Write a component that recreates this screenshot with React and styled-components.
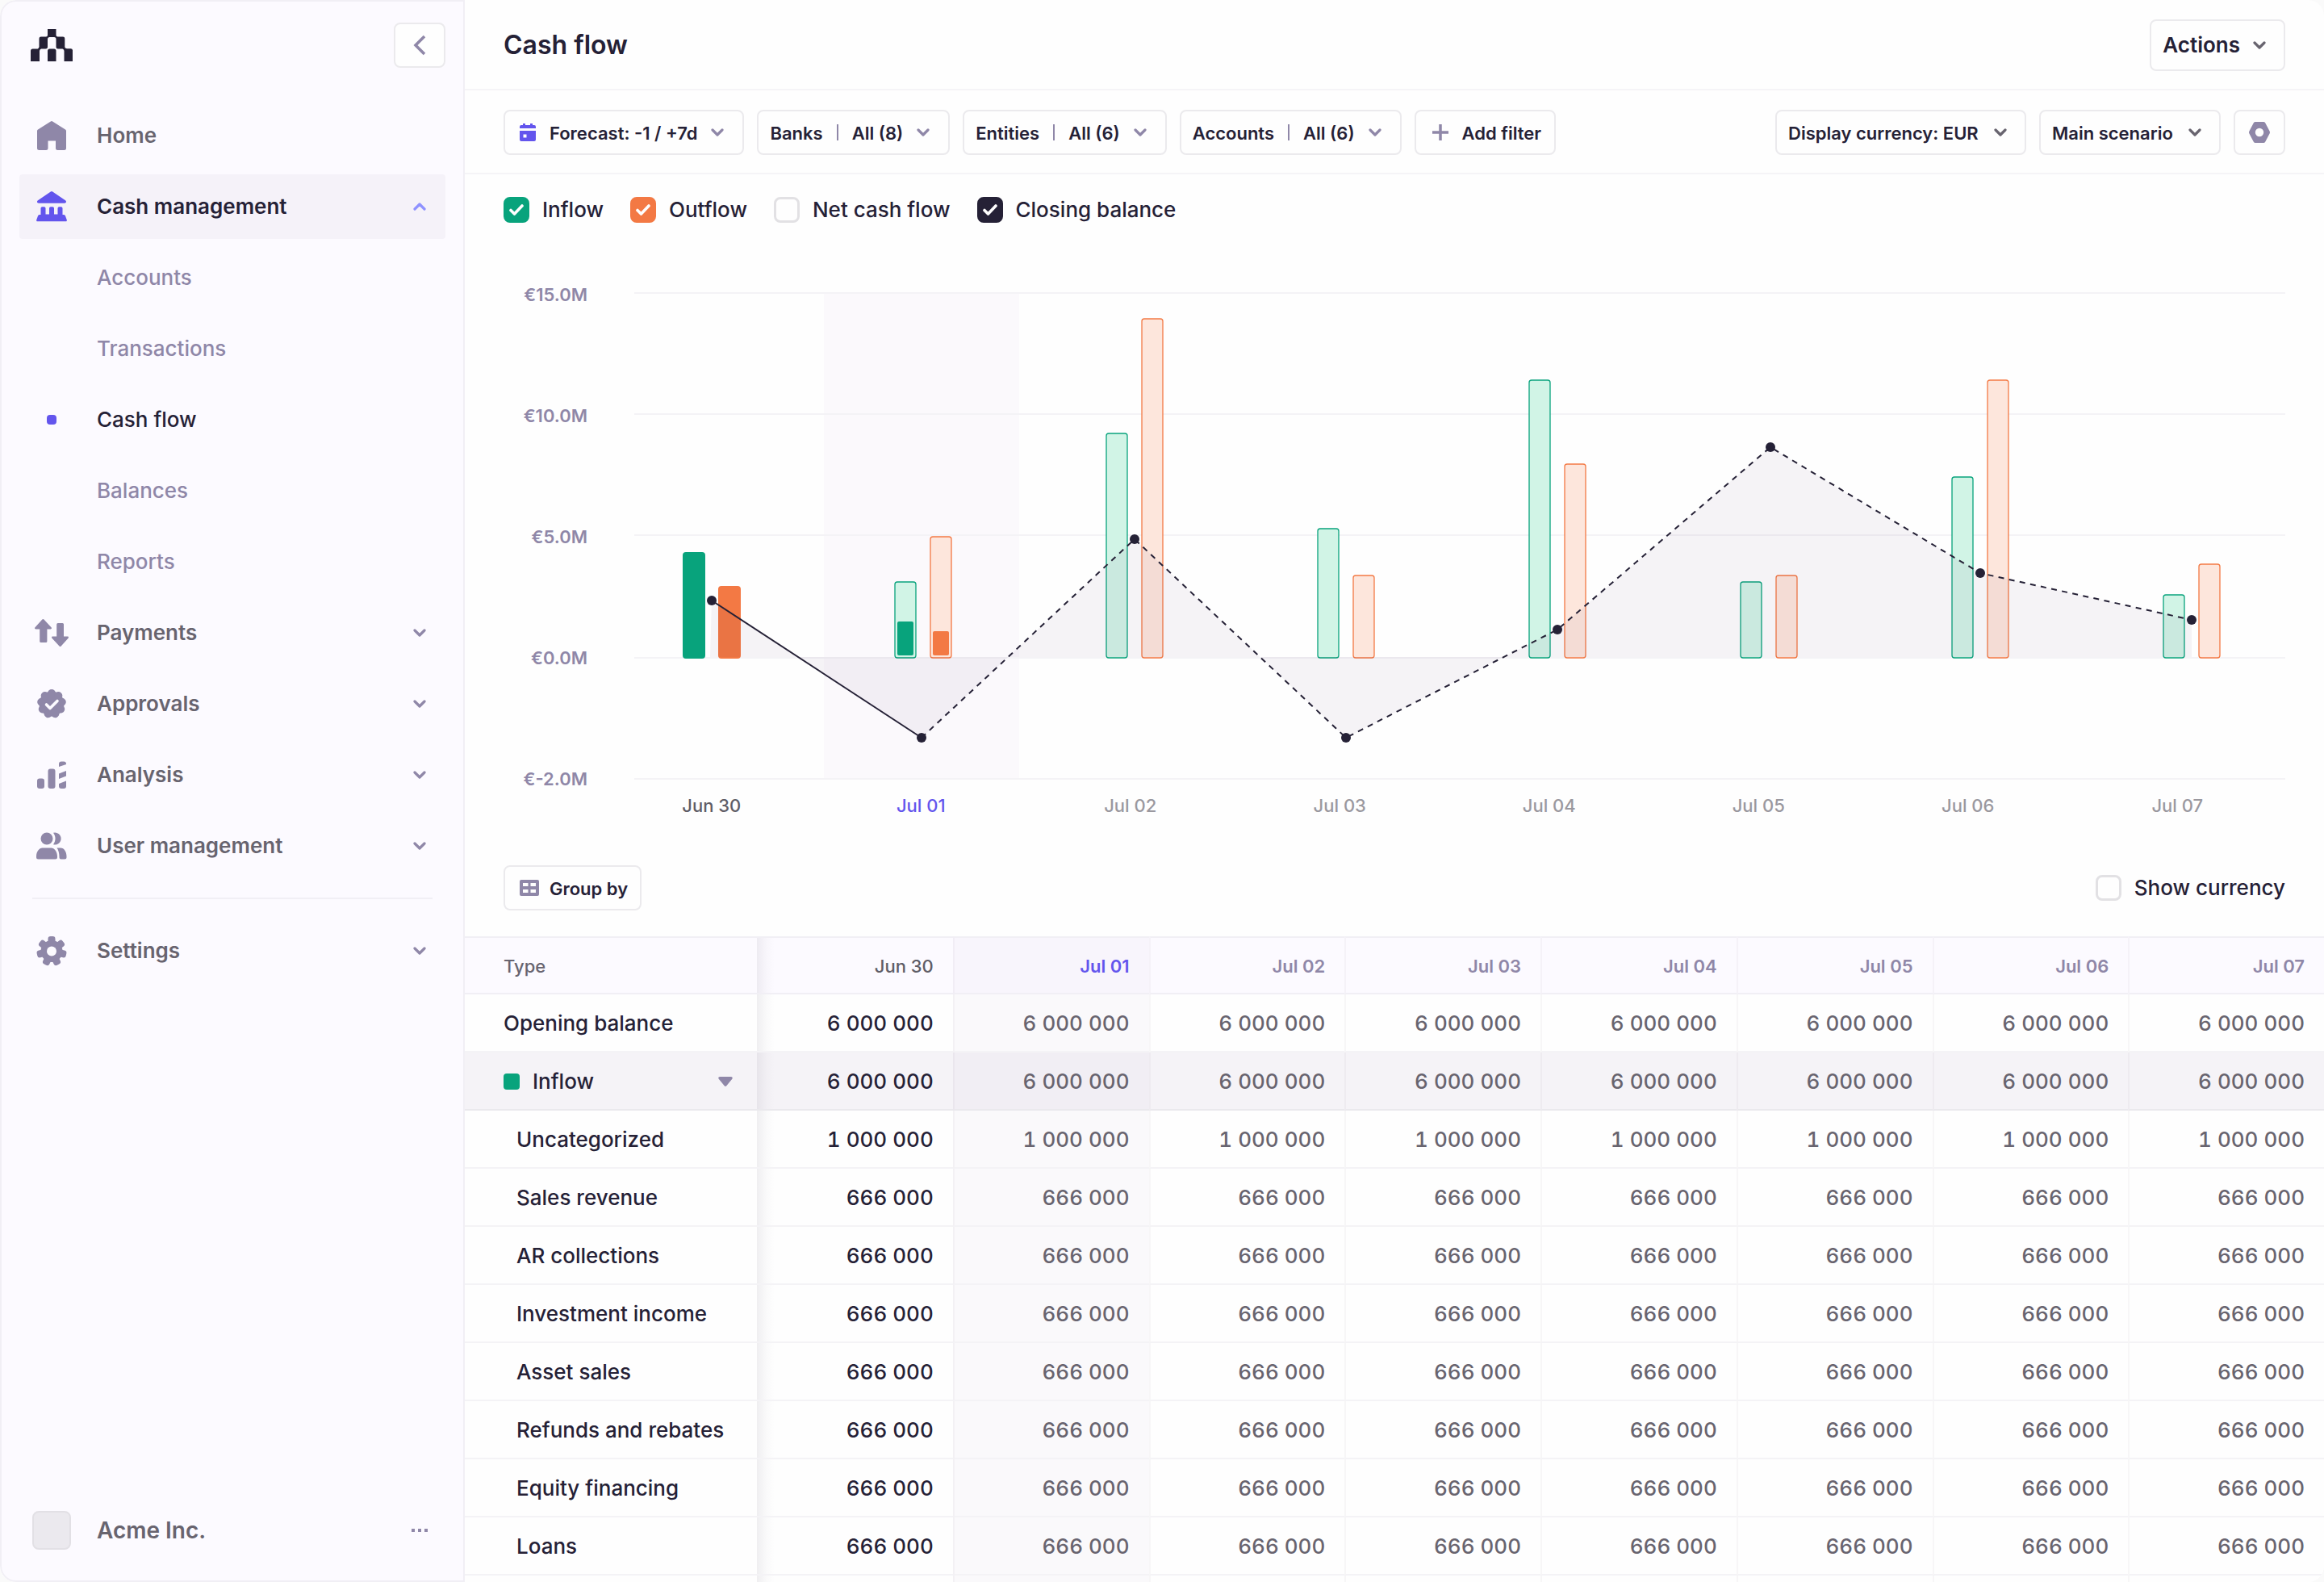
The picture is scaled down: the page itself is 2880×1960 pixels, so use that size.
import React from 'react';
import styled, { createGlobalStyle, css } from 'styled-components';

const GlobalStyle = createGlobalStyle`
  * {
    box-sizing: border-box;
  }
  body {
    margin: 0;
    background: #fafafa;
    color: #252136;
    font-family: "Inter", "Liberation Sans", sans-serif;
    font-size: 26px;
    line-height: 32px;
    font-weight: 500;
  }
  button, select, input {
    font: inherit;
    color: inherit;
    margin: 0;
  }
  a {
    color: inherit;
    text-decoration: none;
  }
  svg {
    display: block;
    flex-shrink: 0;
  }
`;

const days = ['Jun 30', 'Jul 01', 'Jul 02', 'Jul 03', 'Jul 04', 'Jul 05', 'Jul 06', 'Jul 07'];
const TODAY = 1;

const rows = [
  { name: 'Opening balance', value: '6 000 000' },
  { name: 'Inflow', value: '6 000 000', group: true },
  { name: 'Uncategorized', value: '1 000 000', sub: true },
  { name: 'Sales revenue', value: '666 000', sub: true },
  { name: 'AR collections', value: '666 000', sub: true },
  { name: 'Investment income', value: '666 000', sub: true },
  { name: 'Asset sales', value: '666 000', sub: true },
  { name: 'Refunds and rebates', value: '666 000', sub: true },
  { name: 'Equity financing', value: '666 000', sub: true },
  { name: 'Loans', value: '666 000', sub: true },
];

// bar heights and balance positions, in chart units
const series = [
  { inflow: 132, outflow: 90, balance: 382, x: 96 },
  { inflow: 96, outflow: 152, balance: 552, x: 356, inflowDone: 42, outflowDone: 30 },
  { inflow: 280, outflow: 422, balance: 306, x: 620 },
  { inflow: 162, outflow: 104, balance: 552, x: 882 },
  { inflow: 346, outflow: 242, balance: 418, x: 1144 },
  { inflow: 96, outflow: 104, balance: 192, x: 1408 },
  { inflow: 226, outflow: 346, balance: 348, x: 1668 },
  { inflow: 80, outflow: 118, balance: 406, x: 1930 },
];

/* icons */

const Chevron = ({ up }) => (
  <svg width="16" height="12" viewBox="0 0 16 12" fill="none" stroke="currentColor" strokeWidth="3.2" strokeLinecap="round" strokeLinejoin="round">
    <path d={up ? 'M2 9l6-6 6 6' : 'M2 3l6 6 6-6'} />
  </svg>
);

const Logo = () => (
  <svg width="52" height="40" viewBox="0 0 52 40" fill="#252136">
    <path d="M21 0h10.500v7.500a2 2 0 0 0 2 2H40a2.300 2.300 0 0 1 2.300 2.300V21a3 3 0 0 0 3 3.300h4A2.500 2.500 0 0 1 52 27v13H41.500V27a3 3 0 0 0-2-2.500h-5.500a2.500 2.500 0 0 1-2.500-2.500V12.500a2.500 2.500 0 0 0-2.500-2.500h-5.500a2.500 2.500 0 0 0-2.500 2.500V22a2.500 2.500 0 0 1-2.500 2.500H13a3 3 0 0 0-2 2.500v13H0V27a2.500 2.500 0 0 1 2.500-2.500H7A3 3 0 0 0 10.500 21v-9.200a2.300 2.300 0 0 1 2.300-2.300H19a2 2 0 0 0 2-2z" />
    <path d="M21 40V27a2.500 2.500 0 0 1 2.500-2.500h5.500a2.500 2.500 0 0 1 2.500 2.500v13z" />
  </svg>
);

const HomeIcon = () => (
  <svg width="40" height="40" viewBox="0 0 40 40" fill="currentColor">
    <path d="M18.800 2.400a2 2 0 0 1 2.400 0L37 12.400a2 2 0 0 1 1 1.800V35.500a2.500 2.500 0 0 1-2.500 2.500H27.500a2.500 2.500 0 0 1-2.500-2.500V26.500H15.500V35.500a2.500 2.500 0 0 1-2.500 2.500H4.500A2.500 2.500 0 0 1 2 35.500V14.200a2 2 0 0 1 1-1.800z" />
  </svg>
);

const BankIcon = () => (
  <svg width="40" height="40" viewBox="0 0 40 40" fill="currentColor">
    <path d="M18.800 1.500a2 2 0 0 1 2.400 0L37 12.300c1.800 1.300 1 3.400-1 3.400H4c-2 0-2.800-2.100-1-3.400z" />
    <path d="M6.500 30V22a1.800 1.800 0 0 1 1.800-1.800h2.400a1.800 1.800 0 0 1 1.800 1.800v7.500h4.500V22a1.800 1.800 0 0 1 1.800-1.800h2.400a1.800 1.800 0 0 1 1.800 1.800v7.500h4.500V22a1.800 1.800 0 0 1 1.800-1.800h2.400a1.800 1.800 0 0 1 1.800 1.800v8h1.500a2 2 0 0 1 2 1.500l1.800 5a1.200 1.200 0 0 1-1.200 1.700H2.400a1.200 1.200 0 0 1-1.200-1.700l1.800-5a2 2 0 0 1 2-1.500z" />
  </svg>
);

const PaymentsIcon = () => (
  <svg width="42" height="40" viewBox="0 0 42 40" fill="currentColor">
    <path d="M9.300 3.600a1.500 1.500 0 0 1 2.200 0l9 9.600c.9 1 .4 2.200-.9 2.200h-4.200v15a1.500 1.500 0 0 1-1.500 1.500H7.700a1.500 1.500 0 0 1-1.500-1.500v-15H1.400c-1.300 0-1.800-1.200-.9-2.200z" />
    <path d="M32.700 36.400a1.500 1.500 0 0 1-2.200 0l-9-9.600c-.9-1-.4-2.200.9-2.200h4.800v-15a1.500 1.500 0 0 1 1.500-1.500h5.800A1.500 1.500 0 0 1 36 9.600v15h4.600c1.300 0 1.800 1.200.9 2.200z" />
  </svg>
);

const ApprovalsIcon = () => (
  <svg width="40" height="40" viewBox="0 0 40 40" fill="currentColor">
    <circle cx="20" cy="20" r="15.500" />
    {[...Array(9)].map((_, i) => (
      <circle key={i} cx="20" cy="7" r="5" transform={`rotate(${i * 40} 20 20)`} />
    ))}
    <path d="M13.500 21l4.500 4.500 9-9" fill="none" stroke="#fcfaff" strokeWidth="3.600" strokeLinecap="round" strokeLinejoin="round" />
  </svg>
);

const AnalysisIcon = () => (
  <svg width="40" height="40" viewBox="0 0 40 40" fill="currentColor">
    <rect x="2" y="24.500" width="9" height="12.500" rx="3" />
    <rect x="15.500" y="12.500" width="9" height="24.500" rx="3" />
    <path d="M29 10V6.500a3 3 0 0 1 3-3h3a3 3 0 0 1 3 3V7z" />
    <path d="M29 18.500l9-3.500v6.500l-9 3.500z" />
    <path d="M29 31l9-3.500V34a3 3 0 0 1-3 3h-3a3 3 0 0 1-3-3z" />
  </svg>
);

const UsersIcon = () => (
  <svg width="40" height="40" viewBox="0 0 40 40" fill="currentColor">
    <circle cx="14" cy="11" r="7.500" />
    <path d="M22 3.800a7.500 7.500 0 1 1 0 14.400c3.400-4.400 3.400-10 0-14.400z" />
    <path d="M8.500 22.500h11c3.700 0 7.500 4.200 7.500 10.500v1a2.500 2.500 0 0 1-2.500 2.500h-21A2.500 2.500 0 0 1 1 34v-1c0-6.300 3.800-10.500 7.500-10.500z" />
    <path d="M26.500 22.500H31c4.500 0 7.500 5 7.500 10.500v1a2.500 2.500 0 0 1-2.500 2.500h-4.500c-1.300 0-2-1.200-2-2.500 0-5-1-8.500-3-11.500z" />
  </svg>
);

const SettingsIcon = () => (
  <svg width="40" height="40" viewBox="0 0 40 40" fill="currentColor">
    <circle cx="20" cy="20.500" r="13.500" />
    {[...Array(7)].map((_, i) => (
      <rect key={i} x="15.500" y="2" width="9" height="12" rx="3.200" transform={`rotate(${(i * 360) / 7} 20 20.500)`} />
    ))}
    <circle cx="20" cy="20.500" r="6" fill="#fcfaff" />
  </svg>
);

const CalendarIcon = () => (
  <svg width="20" height="24" viewBox="2 0 20 24" fill="#6355ed">
    <path d="M2 7V5a2 2 0 0 1 2-2h2V1h3v2h6V1h3v2h2a2 2 0 0 1 2 2v2z" />
    <path fillRule="evenodd" d="M2 10h20V21a2 2 0 0 1-2 2H4a2 2 0 0 1-2-2zM6.500 14.500v4h4v-4z" />
  </svg>
);

const PlusIcon = () => (
  <svg width="20" height="20" viewBox="0 0 20 20" stroke="#8f87a8" strokeWidth="3.500">
    <path d="M10 0v20M0 10h20" />
  </svg>
);

const HexIcon = () => (
  <svg width="28" height="28" viewBox="0 0 28 28" fill="#8f87a8">
    <path fillRule="evenodd" d="M9 1h10a2.500 2.500 0 0 1 2.200 1.200l5.400 10.400a3 3 0 0 1 0 2.800l-5.400 10.400A2.500 2.500 0 0 1 19 27H9a2.500 2.500 0 0 1-2.200-1.200L1.400 15.400a3 3 0 0 1 0-2.800L6.800 2.200A2.500 2.500 0 0 1 9 1zM14 8.800a5.200 5.200 0 1 0 0 10.400a5.200 5.200 0 1 0 0-10.400z" />
  </svg>
);

const GridIcon = () => (
  <svg width="24" height="20" viewBox="0 0 24 20" fill="#8f87a8">
    <path fillRule="evenodd" d="M2 0h20a2 2 0 0 1 2 2v16a2 2 0 0 1-2 2H2a2 2 0 0 1-2-2V2a2 2 0 0 1 2-2zM4 4v4h6.500V4zM13.500 4v4H20V4zM4 12v4h6.500v-4zM13.500 12v4H20v-4z" />
  </svg>
);

/* layout */

const Shell = styled.div`
  display: grid;
  grid-template-columns: 576px minmax(0, 1fr);
  height: 100vh;
  overflow: hidden;
  background: #fefefe;
  border-radius: 20px;
`;

const Sidebar = styled.aside`
  display: flex;
  flex-direction: column;
  padding: 26px 22px 38px;
  background: #fcfaff;
  border: 2px solid #f1eff5;
  border-radius: 20px 0 0 20px;
`;

const SideTop = styled.div`
  display: flex;
  justify-content: space-between;
  align-items: center;
  padding-left: 14px;
`;

const Box = styled.button`
  display: flex;
  align-items: center;
  justify-content: center;
  gap: ${(p) => p.$gap || 17}px;
  height: ${(p) => (p.$tall ? 64 : 56)}px;
  padding: 0 ${(p) => p.$right || 22}px 0 ${(p) => p.$left || 14}px;
  background: #fefefe;
  border: 2px solid #ebeaed;
  border-radius: 8px;
  font-size: ${(p) => (p.$tall ? 26 : 22)}px;
  font-weight: 600;
  white-space: nowrap;
  cursor: pointer;
`;

const IconBox = styled(Box)`
  width: 64px;
  padding: 0;
  color: #8f87a8;
`;

const BoxText = styled.span`
  padding-top: 2px;
`;

const Muted = styled.span`
  color: ${(p) => (p.$dark ? '#68646f' : '#8f87a8')};
`;

const Nav = styled.nav`
  display: flex;
  flex-direction: column;
  gap: 8px;
  margin-top: 44px;
`;

const NavItem = styled.a`
  display: grid;
  grid-template-columns: 40px 1fr 16px;
  column-gap: 36px;
  align-items: center;
  justify-items: start;
  height: 80px;
  padding: 0 24px 0 20px;
  border-radius: 4px;
  color: #8f87a8;
  font-weight: ${(p) => (p.$sub ? 500 : 600)};
  background: ${(p) => (p.$active ? '#f5f2f9' : 'transparent')};

  > svg:first-child {
    justify-self: center;
    color: ${(p) => (p.$active ? '#6355ed' : '#8f87a8')};
  }
  > svg:last-child {
    color: ${(p) => (p.$active ? '#8f92ff' : '#8f87a8')};
  }
`;

const NavText = styled.span`
  grid-column: 2;
  white-space: nowrap;
  color: ${(p) => (p.$strong ? '#252136' : p.$sub ? '#8f87a8' : '#68646f')};
`;

const Dot = styled.i`
  justify-self: center;
  width: 12px;
  height: 12px;
  border-radius: 4px;
  background: #6355ed;
`;

const Divider = styled.hr`
  width: calc(100% - 32px);
  height: 2px;
  margin: 16px;
  border: 0;
  background: #f1eff5;
`;

const Company = styled.div`
  display: flex;
  align-items: center;
  gap: 32px;
  margin-top: auto;
  padding: 0 22px 0 16px;
  color: #68646f;
  font-size: 28px;
  font-weight: 600;
`;

const Avatar = styled.div`
  width: 48px;
  height: 48px;
  background: #ebe9ee;
  border: 2px solid #e2e0e5;
  border-radius: 8px;
`;

const MoreButton = styled.button`
  display: flex;
  gap: 4px;
  margin-left: auto;
  padding: 12px 0;
  border: 0;
  background: none;

  i {
    width: 4px;
    height: 4px;
    background: #8f87a8;
  }
`;

const Main = styled.main`
  display: flex;
  flex-direction: column;
  overflow: hidden;
`;

const Bar = styled.header`
  display: flex;
  flex-shrink: 0;
  align-items: center;
  gap: 16px;
  height: ${(p) => (p.$filters ? 104 : 112)}px;
  padding: 2px 48px 0;
  border-bottom: 2px solid #f5f4f7;
`;

const Title = styled.h1`
  margin: 0;
  font-size: 32px;
  line-height: 40px;
  font-weight: 600;
`;

const Spacer = styled.div`
  flex: 1;
`;

const Pipe = styled.i`
  width: 2px;
  height: 20px;
  background: #8f87a8;
`;

const SelectWrap = styled.label`
  display: grid;
  align-items: center;

  > * {
    grid-area: 1 / 1;
  }
  svg {
    justify-self: end;
    margin-right: 24px;
    color: #68646f;
    pointer-events: none;
  }
`;

const Select = styled.select`
  appearance: none;
  height: 56px;
  padding: 2px 57px 0 14px;
  background: #fefefe;
  border: 2px solid #ebeaed;
  border-radius: 8px;
  font-size: 22px;
  font-weight: 600;
`;

const Legend = styled.div`
  display: flex;
  gap: 33px;
  padding: 28px 48px 0;
`;

const CheckLabel = styled.label`
  display: flex;
  align-items: center;
  gap: 16px;
  white-space: nowrap;
`;

const CheckStack = styled.span`
  display: grid;
  place-items: center;

  > * {
    grid-area: 1 / 1;
  }
  svg {
    pointer-events: none;
  }
`;

const CheckInput = styled.input`
  appearance: none;
  width: 32px;
  height: 32px;
  border: 3px solid #e2e1e4;
  border-radius: 8px;
  background: #fefefe;

  &:checked {
    border-color: ${(p) => p.$color};
    background: ${(p) => p.$color};
  }
`;

const ChartArea = styled.section`
  display: grid;
  grid-template-columns: 104px minmax(0, 1fr);
  column-gap: 58px;
  padding: 75px 48px 0;
`;

const YAxis = styled.div`
  display: flex;
  flex-direction: column;
  justify-content: space-between;
  text-align: right;
  font-size: 22px;
  line-height: 28px;
  font-weight: 600;
  color: #8f87a8;
`;

const Plot = styled.svg`
  width: 100%;
  height: auto;
  margin: 11px 0 13px;
`;

/* columns run half a step past the plot so each label sits under its bars */
const XAxis = styled.div`
  grid-column: 2;
  display: grid;
  grid-template-columns: repeat(8, 1fr);
  margin-left: -34px;
  padding: 5px 4px 0 0;
  font-size: 22px;
  line-height: 28px;
  text-align: center;
`;

const XLabel = styled.span`
  color: ${(p) => (p.$today ? '#6355ed' : p.$past ? '#5f5d66' : '#9a989f')};
`;

const TableTools = styled.div`
  display: flex;
  align-items: center;
  justify-content: space-between;
  padding: 60px 48px 32px;
`;

const Table = styled.table`
  width: 100%;
  table-layout: fixed;
  border-collapse: separate;
  border-spacing: 0;

  tbody {
    font-variant-numeric: tabular-nums;
  }
`;

const cell = css`
  height: 72px;
  padding: 2px 24px 0 0;
  text-align: right;
  font-weight: 500;
  white-space: nowrap;
  border-bottom: 2px solid #f4f3f6;
`;

const Tr = styled.tr`
  background: ${(p) => (p.$head ? '#fcfaff' : p.$group ? '#f5f3f7' : '#fefefe')};

  th, td {
    ${cell}
    ${(p) => p.$head && css`
      font-size: 22px;
      border-top: 2px solid #f1eff5;
      border-bottom-color: #f1eff5;
    `}
    ${(p) => p.$group && css`
      border-bottom-color: #eae9ed;
    `}
  }
  th:first-child {
    width: 362px;
    padding: 2px 30px 0 ${(p) => (p.$sub ? 64 : 48)}px;
    text-align: left;
    color: ${(p) => (p.$head ? '#68646f' : '#252136')};
  }
`;

const Cell = styled.td`
  color: ${(p) => (p.$today && p.as ? '#6355ed' : p.$past ? (p.as ? '#5f5d66' : '#252136') : p.as ? '#8f87a8' : '#68646f')};
  ${(p) => p.as && !p.$past && css`
    && { font-weight: 600; }
  `}
  ${(p) => p.$past
    ? css`
      background-image: linear-gradient(to right, rgba(50, 40, 70, 0.07), rgba(50, 40, 70, 0.02) 12px, transparent 22px);
    `
    : css`
      border-left: 2px solid rgba(50, 40, 70, 0.035);
    `}
  ${(p) => p.$today && css`
    background-color: rgba(100, 40, 120, 0.024);
  `}
`;

const RowName = styled.div`
  display: flex;
  align-items: center;
  gap: 16px;

  svg {
    margin-left: auto;
  }
`;

const Swatch = styled.i`
  width: 20px;
  height: 20px;
  border-radius: 4px;
  background: #08a37c;
`;

const Check = ({ label, color = '#252136', checked }) => (
  <CheckLabel>
    <CheckStack>
      <CheckInput type="checkbox" defaultChecked={checked} $color={color} />
      <svg width="20" height="16" viewBox="0 0 20 16" fill="none" stroke="#fefefe" strokeWidth="3.600" strokeLinecap="round" strokeLinejoin="round">
        <path d="M3 8.500l4.500 4.500L17 3" />
      </svg>
    </CheckStack>
    {label}
  </CheckLabel>
);

const Filter = ({ name, value }) => (
  <Box $right={23} aria-haspopup="listbox">
    <BoxText>{name}</BoxText>
    <Pipe />
    <BoxText>{value}</BoxText>
    <Muted><Chevron /></Muted>
  </Box>
);

const ChartBar = ({ x, h, done, color, tint, solid }) => (
  <>
    <rect x={x + 1} y={455 - h} width="26" height={h - 2} rx="3" fill={solid ? color : tint} stroke={color} strokeWidth={solid ? 2 : 1.3} />
    {done && <rect x={x + 4} y={450 - done} width="20" height={done} rx="2" fill={color} />}
  </>
);

const Chart = () => {
  const points = series.map((d) => `${d.x},${d.balance}`);
  return (
    <Plot viewBox="0 0 2046 604" role="img" aria-label="Cash flow by day">
      <rect x="235" y="0" width="242" height="604" fill="#fbf9fc" />
      {[1, 151, 301, 453, 603].map((y) => (
        <path key={y} d={`M0 ${y}h2046`} stroke="#f4f3f6" strokeWidth="2" />
      ))}
      {series.map((d, i) => (
        <g key={i}>
          <ChartBar x={60 + i * 262} h={d.inflow} done={d.inflowDone} color="#08a37c" tint="#d1f4e6" solid={i < TODAY} />
          <ChartBar x={104 + i * 262} h={d.outflow} done={d.outflowDone} color="#f37944" tint="#fde6dc" solid={i < TODAY} />
        </g>
      ))}
      <path d={`M94,452 L${points.join(' L')} L1930,452 Z`} fill="rgba(60, 20, 80, 0.046)" />
      <path d={`M${points.slice(0, 2).join(' L')}`} fill="none" stroke="#252136" strokeWidth="2" />
      <path d={`M${points.slice(1).join(' L')}`} fill="none" stroke="#252136" strokeWidth="2" strokeDasharray="7 6.400" />
      {series.map((d) => (
        <circle key={d.x} cx={d.x} cy={d.balance} r="6" fill="#252136" />
      ))}
    </Plot>
  );
};

const App = () => {
  return (
    <>
      <GlobalStyle />
      <Shell>
        <Sidebar>
          <SideTop>
            <Logo />
            <IconBox aria-label="Collapse sidebar">
              <svg width="16" height="26" viewBox="0 0 16 26" fill="none" stroke="currentColor" strokeWidth="3.600">
                <path d="M14 2L3 13l11 11" />
              </svg>
            </IconBox>
          </SideTop>
          <Nav>
            <NavItem href="#home"><HomeIcon /><NavText>Home</NavText></NavItem>
            <NavItem href="#cash" $active><BankIcon /><NavText $strong>Cash management</NavText><Chevron up /></NavItem>
            <NavItem href="#accounts" $sub><NavText $sub>Accounts</NavText></NavItem>
            <NavItem href="#transactions" $sub><NavText $sub>Transactions</NavText></NavItem>
            <NavItem href="#cash-flow" $sub aria-current="page"><Dot /><NavText $strong>Cash flow</NavText></NavItem>
            <NavItem href="#balances" $sub><NavText $sub>Balances</NavText></NavItem>
            <NavItem href="#reports" $sub><NavText $sub>Reports</NavText></NavItem>
            <NavItem href="#payments"><PaymentsIcon /><NavText>Payments</NavText><Chevron /></NavItem>
            <NavItem href="#approvals"><ApprovalsIcon /><NavText>Approvals</NavText><Chevron /></NavItem>
            <NavItem href="#analysis"><AnalysisIcon /><NavText>Analysis</NavText><Chevron /></NavItem>
            <NavItem href="#users"><UsersIcon /><NavText>User management</NavText><Chevron /></NavItem>
            <Divider />
            <NavItem href="#settings"><SettingsIcon /><NavText>Settings</NavText><Chevron /></NavItem>
          </Nav>
          <Company>
            <Avatar />
            Acme Inc.
            <MoreButton aria-label="More"><i /><i /><i /></MoreButton>
          </Company>
        </Sidebar>

        <Main>
          <Bar>
            <Title>Cash flow</Title>
            <Spacer />
            <Box $tall $gap={16} aria-haspopup="menu">
              Actions
              <Muted $dark><Chevron /></Muted>
            </Box>
          </Bar>
          <Bar $filters as="div">
            <Box $left={18} $right={23} aria-haspopup="listbox">
              <CalendarIcon />
              <BoxText>Forecast: -1 / +7d</BoxText>
              <Muted><Chevron /></Muted>
            </Box>
            <Filter name="Banks" value="All (8)" />
            <Filter name="Entities" value="All (6)" />
            <Filter name="Accounts" value="All (6)" />
            <Box $left={20} $right={16}>
              <PlusIcon />
              <BoxText>Add filter</BoxText>
            </Box>
            <Spacer />
            <SelectWrap>
              <Select aria-label="Display currency">
                <option>Display currency: EUR</option>
              </Select>
              <Chevron />
            </SelectWrap>
            <SelectWrap>
              <Select aria-label="Scenario">
                <option>Main scenario</option>
              </Select>
              <Chevron />
            </SelectWrap>
            <IconBox aria-label="View settings"><HexIcon /></IconBox>
          </Bar>

          <Legend>
            <Check label="Inflow" color="#08a37c" checked />
            <Check label="Outflow" color="#f37944" checked />
            <Check label="Net cash flow" />
            <Check label="Closing balance" checked />
          </Legend>

          <ChartArea>
            <YAxis>
              <span>€15.0M</span>
              <span>€10.0M</span>
              <span>€5.0M</span>
              <span>€0.0M</span>
              <span>€-2.0M</span>
            </YAxis>
            <Chart />
            <XAxis>
              {days.map((day, i) => (
                <XLabel key={day} $today={i === TODAY} $past={i < TODAY}>{day}</XLabel>
              ))}
            </XAxis>
          </ChartArea>

          <TableTools>
            <Box $left={18} $right={15} $gap={13}>
              <GridIcon />
              <BoxText>Group by</BoxText>
            </Box>
            <Check label="Show currency" />
          </TableTools>

          <Table>
            <thead>
              <Tr $head>
                <th scope="col">Type</th>
                {days.map((day, i) => (
                  <Cell as="th" scope="col" key={day} $today={i === TODAY} $past={i < TODAY}>{day}</Cell>
                ))}
              </Tr>
            </thead>
            <tbody>
              {rows.map((row) => (
                <Tr key={row.name} $group={row.group} $sub={row.sub}>
                  <th scope="row">
                    <RowName>
                      {row.group && <Swatch />}
                      {row.name}
                      {row.group && (
                        <svg width="18" height="12" viewBox="0 0 18 12" fill="#8f87a8">
                          <path d="M2 0h14c1.500 0 2.300 1.500 1.300 2.700l-7 8.500a1.700 1.700 0 0 1-2.600 0l-7-8.500C-.3 1.500.5 0 2 0z" />
                        </svg>
                      )}
                    </RowName>
                  </th>
                  {days.map((day, i) => (
                    <Cell key={day} $today={i === TODAY} $past={i < TODAY}>{row.value}</Cell>
                  ))}
                </Tr>
              ))}
              <Tr>
                <th />
                {days.map((day, i) => (
                  <Cell key={day} $today={i === TODAY} $past={i < TODAY} />
                ))}
              </Tr>
            </tbody>
          </Table>
        </Main>
      </Shell>
    </>
  );
};

export default App;
